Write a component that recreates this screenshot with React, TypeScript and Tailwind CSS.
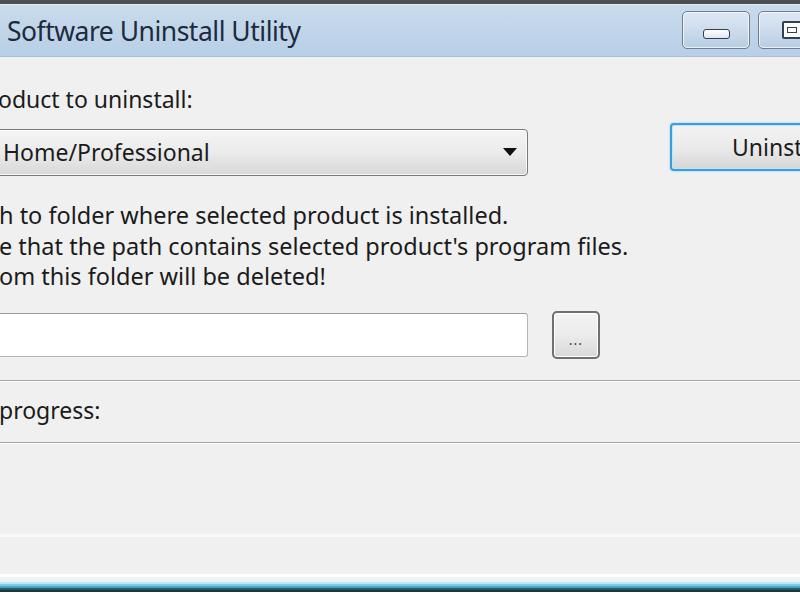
import React from "react";

export default function App() {
  const font = { fontFamily: '"Noto Sans", "Open Sans", sans-serif' };
  return (
    <div
      className="w-[800px] h-[600px] overflow-hidden bg-[#f0f0f0] flex flex-col text-[#1b1b1b]"
      style={font}
    >
      {/* top dark frame */}
      <div className="h-[4px] bg-[#4e4f52] shrink-0" />
      <div className="h-[1px] bg-[#dfe8f1] shrink-0" />
      {/* title bar */}
      <div className="h-[52px] shrink-0 flex items-center bg-gradient-to-b from-[#c9dbec] to-[#b8cfe7] border-b border-[#a9bfd6]">
        <div className="pl-[7px] text-[26.5px] leading-none text-[#1d2b3c] tracking-[-0.5px] mt-[1px] whitespace-nowrap">
          Software Uninstall Utility
        </div>
        <div className="ml-auto flex gap-[8px] -mt-[2px] -mr-[26px] shrink-0">
          <div className="w-[68px] h-[38px] rounded-[5px] border border-[#6d7c8f] shadow-[inset_0_0_0_1px_rgba(255,255,255,0.7)] bg-gradient-to-b from-[#dde8f4] via-[#cddcec] to-[#b6cde5] flex items-center justify-center">
            <div className="w-[27px] h-[10px] mt-[8px] rounded-[3px] border border-[#34404e] bg-gradient-to-b from-white to-[#dfe6ee]" />
          </div>
          <div className="w-[68px] h-[38px] rounded-[5px] border border-[#6d7c8f] shadow-[inset_0_0_0_1px_rgba(255,255,255,0.7)] bg-gradient-to-b from-[#dde8f4] via-[#cddcec] to-[#b6cde5] flex items-center pl-[23px]">
            <div className="w-[20px] h-[18px] rounded-[2px] border-[2px] border-[#34404e] bg-white flex items-center justify-center">
              <div className="w-[10px] h-[6px] border border-[#34404e]" />
            </div>
          </div>
        </div>
      </div>

      {/* content */}
      <div className="flex flex-col">
        <div className="mt-[27px] text-[23px] leading-[30px] -ml-[2px] whitespace-nowrap">
          oduct to uninstall:
        </div>

        <div className="mt-[9px] flex items-start">
          <div className="mt-[6px] -ml-[6px] w-[534px] h-[47px] shrink-0 rounded-[4px] border border-[#7a7a7a] bg-gradient-to-b from-[#f4f4f4] via-[#ebebeb] to-[#d8d8d8] shadow-[inset_0_0_0_1px_rgba(255,255,255,0.8)] flex items-center pl-[8px] pr-[10px]">
            <span className="text-[23px]">Home/Professional</span>
            <svg className="ml-auto" width="14" height="9" viewBox="0 0 14 9">
              <path d="M0 0 L14 0 L7 8 Z" fill="#111" />
            </svg>
          </div>
          <div className="ml-[142px] w-[150px] h-[48px] shrink-0 rounded-[4px] border-[2px] border-[#3a9fd8] shadow-[0_0_2px_#6cc4ee,inset_0_0_0_1px_#bfe5f8] bg-gradient-to-b from-[#f3f3f3] via-[#ebebeb] to-[#d6d6d6] flex items-center pl-[60px]">
            <span className="text-[23px] whitespace-nowrap">Uninstall</span>
          </div>
        </div>

        <div className="mt-[24px] text-[23.5px] leading-[30.5px] whitespace-nowrap">
          <div className="-ml-[1px]">h to folder where selected product is installed.</div>
          <div className="-ml-[1px]">e that the path contains selected product's program files.</div>
          <div className="-ml-[1px]">om this folder will be deleted!</div>
        </div>

        <div className="mt-[19px] flex items-start">
          <div className="mt-[2px] -ml-[6px] w-[534px] h-[44px] shrink-0 rounded-[3px] border border-[#b5b5b5] border-t-[#9a9a9a] bg-white" />
          <div className="ml-[24px] w-[48px] h-[48px] shrink-0 rounded-[5px] border-[2px] border-[#707070] shadow-[inset_0_0_0_1px_rgba(255,255,255,0.9)] bg-gradient-to-b from-[#f3f3f3] via-[#ececec] to-[#d8d8d8] flex items-center justify-center">
            <span className="text-[14px] leading-none mt-[10px] text-[#444] tracking-[1px]">...</span>
          </div>
        </div>

        <div className="mt-[21px] h-[2px] border-t border-[#a3a3a3] bg-white" />

        <div className="mt-[13px] text-[23px] leading-[30px] -ml-[1px]">
          progress:
        </div>

        <div className="mt-[17px] h-[2px] border-t border-[#a3a3a3] bg-white" />

        <div className="mt-[90px] h-[3px] bg-[#f9f9f9]" />
        <div className="mt-[37px] h-[3px] bg-white" />
        <div className="h-[5px] bg-gradient-to-b from-[#f4f4f4] to-[#e6f3f7]" />
        <div className="h-[2px] bg-[#bfe6f1]" />
        <div className="h-[2px] bg-[#7fcbe2]" />
        <div className="h-[2px] bg-[#45a8c8]" />
        <div className="h-[2px] bg-[#1f5d70]" />
        <div className="h-[2px] bg-[#22323a]" />
        <div className="h-[20px] bg-white" />
      </div>
    </div>
  );
}
